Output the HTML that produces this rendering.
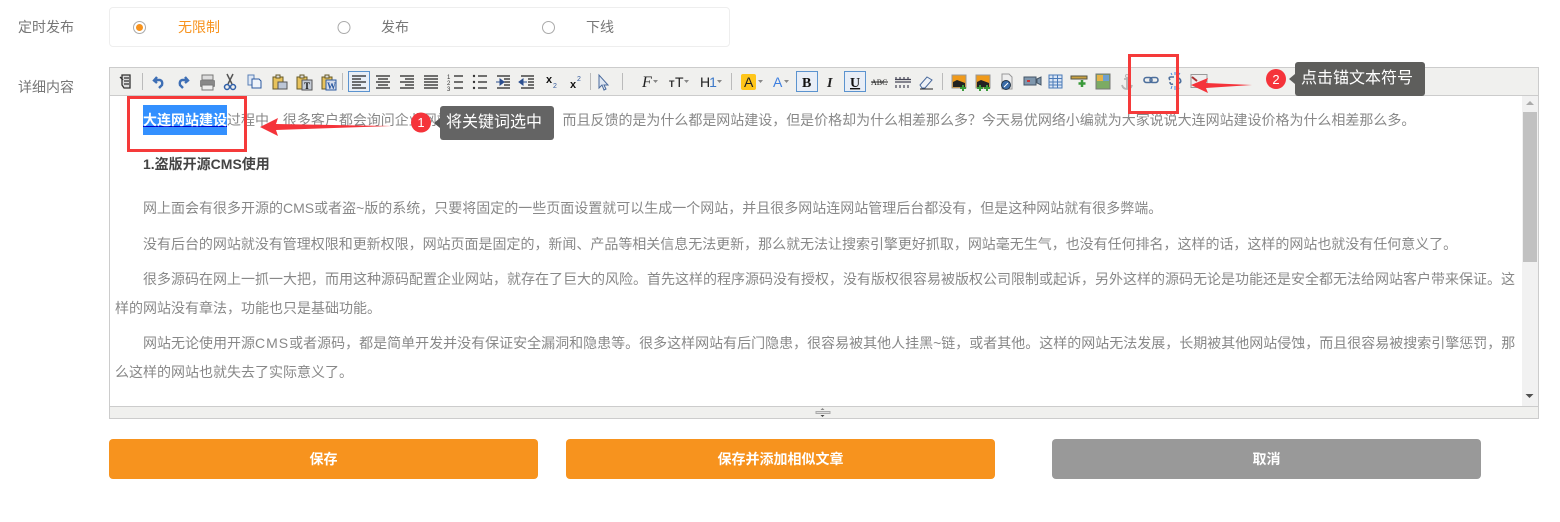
<!DOCTYPE html>
<html lang="zh">
<head>
<meta charset="utf-8">
<style>
html,body{margin:0;padding:0;background:#fff}
body{width:1560px;height:522px;position:relative;overflow:hidden;font-family:"Liberation Sans","Noto Sans CJK SC",sans-serif;font-size:14px;color:#777}
.a{position:absolute;white-space:nowrap}
.t{position:absolute;white-space:nowrap;font-size:14px;line-height:20px;color:#888}
.btn{position:absolute;top:439px;width:429px;height:40px;border-radius:4px;background:#f7931e;color:#fff;font-weight:bold;font-size:14px;line-height:40px;text-align:center}
.lb{position:absolute;background:#646464;border-radius:3px;color:#fff;font-size:16px;line-height:34px;height:34px;text-align:left;white-space:nowrap}
</style>
</head>
<body>
<div class="a" style="left:18px;top:19px;line-height:17px">定时发布</div>
<div class="a" style="left:109px;top:7px;width:619px;height:38px;border:1px solid #eee;border-radius:4px"></div>
<svg class="a" style="left:130px;top:18px" width="430" height="18" fill="none">
<circle cx="9.500" cy="9.500" r="6" stroke="#aaa"/><circle cx="9.500" cy="9.500" r="3.500" fill="#f7931e"/>
<circle cx="214" cy="9.500" r="6" stroke="#aaa"/><circle cx="418.500" cy="9.500" r="6" stroke="#aaa"/>
</svg>
<div class="a" style="left:178px;top:19px;line-height:17px;color:#f7931e">无限制</div>
<div class="a" style="left:381px;top:19px;line-height:17px">发布</div>
<div class="a" style="left:586px;top:19px;line-height:17px">下线</div>
<div class="a" style="left:18px;top:79px;line-height:17px">详细内容</div>

<div class="a" style="left:109px;top:67px;width:1428px;height:350px;border:1px solid #ccc;background:#fff"></div>
<div class="a" style="left:110px;top:68px;width:1428px;height:27px;background:#f0f0ee;border-bottom:1px solid #ccc"></div>
<div class="a" style="left:110px;top:406px;width:1428px;height:11px;background:#f0f0ee;border-top:1px solid #ccc"></div>

<svg class="a" style="left:110px;top:68px" width="1100" height="27" fill="none" font-family="Liberation Sans, sans-serif">
<g stroke="#bbb"><path d="M32.500 5v17M232.500 5v17M480.500 5v17M512.500 5v17M621.500 5v17M832.500 5v17"/></g>
<rect x="238.500" y="3.500" width="21" height="20" fill="#e8eef7" stroke="#5b93cf"/>
<rect x="686.500" y="3.500" width="21" height="20" fill="#e8eef7" stroke="#5b93cf"/>
<rect x="734.500" y="3.500" width="21" height="20" fill="#e8eef7" stroke="#5b93cf"/>
<path d="M12 7h8v13h-6l-2-3zM10 9l3 3M14 10h5M14 13h5M14 16h5" stroke="#333" stroke-width="1.300" fill="#ddd"/>
<path d="M47 9l-3 3.500 3 2.500M44 12h6q3 1 2 5l-3 3" stroke="#3e6fb5" stroke-width="2.400"/>
<path d="M75 9l3 3.500-3 2.500M78 12h-6q-3 1-2 5l3 3" stroke="#3e6fb5" stroke-width="2.400"/>
<rect x="90" y="12" width="15" height="7" rx="1" fill="#888"/><rect x="92" y="7" width="11" height="5" fill="#ddd" stroke="#777"/><rect x="92" y="17" width="11" height="5" fill="#eee" stroke="#777"/>
<path d="M117 6l5 10M123 6l-5 10" stroke="#555" stroke-width="1.500"/><circle cx="117" cy="19" r="2.500" stroke="#2f5fa8" stroke-width="1.500"/><circle cx="123" cy="19" r="2.500" stroke="#2f5fa8" stroke-width="1.500"/>
<path d="M138 7h6v10h-6z" fill="#dfe8f5" stroke="#5a7fb5"/><path d="M142 11h7l2 2v7h-9z" fill="#eef3fa" stroke="#2c5aa0"/>
<g stroke="#665a28"><rect x="163" y="9" width="10" height="12" fill="#e8c35c"/><rect x="166" y="7" width="4" height="3" fill="#ddd"/><rect x="168" y="14" width="9" height="7" fill="#bcc6d6" stroke="#555"/></g>
<g stroke="#665a28"><rect x="187" y="9" width="10" height="12" fill="#e8c35c"/><rect x="190" y="7" width="4" height="3" fill="#ddd"/><rect x="192" y="12" width="10" height="10" fill="#c5ccd6" stroke="#555"/></g>
<text x="194" y="21" font-size="9" font-weight="bold" fill="#111" font-family="Liberation Serif, serif">T</text>
<g stroke="#665a28"><rect x="212" y="9" width="10" height="12" fill="#e8c35c"/><rect x="215" y="7" width="4" height="3" fill="#ddd"/><rect x="216" y="12" width="10" height="10" fill="#d5dcea" stroke="#2c5aa0"/></g>
<text x="217" y="21" font-size="9" font-weight="bold" fill="#2c5aa0" font-family="Liberation Serif, serif">W</text>
<g stroke="#222" stroke-width="1.200">
<path d="M242 8h14M242 11h9M242 14h14M242 17h9M242 20h14"/>
<path d="M266 8h14M268 11h10M266 14h14M268 17h10M266 20h14"/>
<path d="M290 8h14M295 11h9M290 14h14M295 17h9M290 20h14"/>
<path d="M314 8h14M314 11h14M314 14h14M314 17h14M314 20h14"/>
<path d="M344 8h9M344 14h9M344 20h9"/>
<path d="M368 8h9M368 14h9M368 20h9"/>
</g>
<text x="337" y="11" font-size="6" fill="#333">1</text><text x="337" y="17" font-size="6" fill="#333">2</text><text x="337" y="23" font-size="6" fill="#333">3</text>
<g fill="#333"><circle cx="364" cy="8" r="1.200"/><circle cx="364" cy="14" r="1.200"/><circle cx="364" cy="20" r="1.200"/></g>
<g stroke="#222" stroke-width="1.200"><path d="M387 8h13M394 11h6M394 14h6M394 17h6M387 20h13M411 8h13M418 11h6M418 14h6M418 17h6M411 20h13"/></g>
<path d="M386 14h4M390 11v6l4-3z" fill="#2c4f8f" stroke="#2c4f8f"/><path d="M417 14h-4M413 11v6l-4-3z" fill="#2c4f8f" stroke="#2c4f8f"/>
<text x="436" y="15" font-size="11" font-weight="bold" fill="#111">x</text><text x="443" y="20" font-size="7" fill="#345a9c">2</text>
<text x="460" y="20" font-size="11" font-weight="bold" fill="#111">x</text><text x="467" y="13" font-size="7" fill="#345a9c">2</text>
<path d="M489 7v13l3-3 2 5 2-1-2-4h4z" fill="#dfe7f2" stroke="#4a6a9c"/>
<text x="532" y="19" font-size="16" font-style="italic" fill="#222" font-family="Liberation Serif, serif">F</text>
<text x="559" y="19" font-size="9" font-weight="bold" fill="#222">T</text><text x="565" y="19" font-size="14" fill="#222">T</text>
<text x="590" y="19" font-size="14" fill="#222">H<tspan fill="#3b78c9" dx="-1">1</tspan></text>
<path d="M543 12h5l-2.500 3zM574 12h5l-2.500 3zM607 12h5l-2.500 3zM648 12h5l-2.500 3zM674 12h5l-2.500 3z" fill="#888"/>
<rect x="631" y="6" width="15" height="16" rx="2" fill="#ffc61a"/><text x="634" y="19" font-size="14" fill="#222">A</text>
<text x="663" y="19" font-size="14" fill="#3d7fe0">A</text>
<text x="692" y="19" font-size="14" font-weight="bold" fill="#111" font-family="Liberation Serif, serif">B</text>
<text x="717" y="19" font-size="14" font-weight="bold" font-style="italic" fill="#222" font-family="Liberation Serif, serif">I</text>
<text x="740" y="19" font-size="14" font-weight="bold" fill="#111" text-decoration="underline" font-family="Liberation Serif, serif">U</text>
<text x="761" y="17" font-size="8" fill="#222" font-family="Liberation Serif, serif">ABC</text><path d="M761 14h17" stroke="#222"/>
<path d="M785 14h16M786 9v2M790 9v2M794 9v2M798 9v2M786 17v3M790 17v3M794 17v3M798 17v3M785 11.500h16" stroke="#445" stroke-width="1.200"/>
<path d="M810 17l7-8 5 3-7 8h-3z" fill="#eef2f7" stroke="#4a6a9c"/><path d="M810 21h13" stroke="#222"/>
<g><rect x="842" y="7" width="14" height="13" fill="#f09a1a" stroke="#999"/><path d="M843 14l4-2 8 3v4h-12z" fill="#222"/><path d="M853 17v6M850 20h6" stroke="#3a9a3a" stroke-width="2"/></g>
<g><rect x="866" y="7" width="14" height="13" fill="#f09a1a" stroke="#999"/><path d="M867 14l4-2 8 3v4h-12z" fill="#222"/><path d="M870 17v6M867 20h6M877 17v6M874 20h6" stroke="#3a9a3a" stroke-width="2"/></g>
<path d="M892 6h7l3 3v12h-10z" fill="#eee" stroke="#999"/><circle cx="896" cy="17" r="4.500" fill="#3a6ca8" stroke="#234"/><path d="M894 19l4-4" stroke="#fff"/>
<path d="M914 9h12v8h-12zM927 11l4-2v8l-4-2z" fill="#7f97ad" stroke="#456"/><rect x="917" y="12" width="3" height="2" fill="#c33"/>
<rect x="939" y="7" width="13" height="13" fill="#dbe6f5" stroke="#4a7ab8"/><path d="M939 10.500h13M939 14h13M939 17h13M943 7v13M947.500 7v13" stroke="#4a7ab8"/>
<rect x="961" y="8" width="16" height="3" fill="#c8a040" stroke="#554"/><path d="M972 12v7M968.500 15.500h7" stroke="#3a9a3a" stroke-width="2.500"/>
<rect x="986" y="6" width="14" height="15" fill="#7cab64" stroke="#777"/><path d="M987 7h6v6h-6z" fill="#e5b348"/><path d="M993 7h6v6h-6z" fill="#6ea0d0"/>
<path d="M1017 9v11M1012 17q1 4 5 4t5-4M1014 11h6" stroke="#b5b5b5" stroke-width="1.800"/><circle cx="1017" cy="8" r="1.500" stroke="#b5b5b5"/>
<rect x="1034" y="9.500" width="8" height="5" rx="2.500" stroke="#4d6f9c" stroke-width="1.600"/><rect x="1040" y="9.500" width="8" height="5" rx="2.500" stroke="#4d6f9c" stroke-width="1.600"/>
<path d="M1060 12q-2-3 1-3h3M1066 15h3q3-1 1-4M1060 14q0 3 3 2M1070 11l-3-2" stroke="#4d6f9c" stroke-width="1.600"/><path d="M1065 4v3M1070 5l-2 3M1061 5l1 2M1065 18v4M1061 21l1-3M1069 21l-1-3" stroke="#4a8ae0"/>
<rect x="1081" y="6.500" width="16" height="13" fill="#eee" stroke="#999"/><path d="M1082 9l5 4" stroke="#a33" stroke-width="2"/>
</svg>

<div class="t" style="left:143px;top:110px;padding-left:84px;letter-spacing:-.02px">过程中，很多客户都会询问企业网站建设价格是多少，而且反馈的是为什么都是网站建设，但是价格却为什么相差那么多？今天易优网络小编就为大家说说大连网站建设价格为什么相差那么多。</div>
<div class="a" style="left:143px;top:105px;width:84px;height:30px;background:#3390ff"></div>
<div class="a" style="left:143px;top:110px;width:84px;line-height:20px;font-size:14px;font-weight:bold;color:#fff;text-decoration:underline;text-decoration-color:#00c">大连网站建设</div>
<div class="t" style="left:143px;top:154px;font-weight:bold;color:#444">1.盗版开源CMS使用</div>
<div class="t" style="left:143px;top:198px">网上面会有很多开源的CMS或者盗~版的系统，只要将固定的一些页面设置就可以生成一个网站，并且很多网站连网站管理后台都没有，但是这种网站就有很多弊端。</div>
<div class="t" style="left:143px;top:234px;letter-spacing:-.02px">没有后台的网站就没有管理权限和更新权限，网站页面是固定的，新闻、产品等相关信息无法更新，那么就无法让搜索引擎更好抓取，网站毫无生气，也没有任何排名，这样的话，这样的网站也就没有任何意义了。</div>
<div class="t" style="left:143px;top:269px">很多源码在网上一抓一大把，而用这种源码配置企业网站，就存在了巨大的风险。首先这样的程序源码没有授权，没有版权很容易被版权公司限制或起诉，另外这样的源码无论是功能还是安全都无法给网站客户带来保证。这</div>
<div class="t" style="left:115px;top:298px">样的网站没有章法，功能也只是基础功能。</div>
<div class="t" style="left:143px;top:333px">网站无论使用开源<span style="letter-spacing:1px">CMS</span>或者源码，都是简单开发并没有保证安全漏洞和隐患等。很多这样网站有后门隐患，很容易被其他人挂黑~链，或者其他。这样的网站无法发展，长期被其他网站侵蚀，而且很容易被搜索引擎惩罚，那</div>
<div class="t" style="left:115px;top:362px">么这样的网站也就失去了实际意义了。</div>

<div class="a" style="left:1522px;top:96px;width:16px;height:310px;background:#f1f1f1"></div>
<div class="a" style="left:1523px;top:112px;width:14px;height:150px;background:#c1c1c1"></div>
<svg class="a" style="left:1522px;top:96px" width="16" height="310"><path d="M4 9h8l-4-4z" fill="#aaa"/><path d="M3.500 298h8l-4 4z" fill="#505050"/></svg>
<svg class="a" style="left:815px;top:407px" width="16" height="11" fill="none"><path d="M5.500 3h4L7.500 1z" fill="#888"/><rect x="1" y="4.500" width="14" height="2" fill="#ddd" stroke="#aaa"/><path d="M5.500 8h4l-2 2z" fill="#444"/></svg>

<svg class="a" style="left:0;top:0" width="1560" height="522" fill="none">
<rect x="128.500" y="97.500" width="117" height="53" stroke="#f53a3a" stroke-width="3"/>
<rect x="1129.500" y="55.500" width="48" height="57" stroke="#f53a3a" stroke-width="3"/>
<path d="M260 127l18-9-2 6 116 2-116 4 2 6z" fill="#f5333a"/>
<path d="M1191 85l17-7-2 5 46 2-46 3 2 5z" fill="#f5333a"/>
<circle cx="421" cy="122.500" r="10" fill="#f5333a"/>
<circle cx="1276" cy="79" r="10" fill="#f5333a"/>
<path d="M440 118l-6 5 6 5z" fill="#555"/>
<path d="M1295 74l-6 5 6 5z" fill="#5e5e5c"/>
</svg>
<div class="a" style="left:416px;top:114px;width:10px;text-align:center;color:#fff;font-size:13px;line-height:17px">1</div>
<div class="a" style="left:1271px;top:71px;width:10px;text-align:center;color:#fff;font-size:13px;line-height:17px">2</div>
<div class="lb" style="left:440px;top:106px;width:108px;padding-left:6px">将关键词选中</div>
<div class="lb" style="left:1295px;top:62px;width:124px;padding-left:6px;background:#5e5e5c">点击锚文本符号</div>

<div class="btn" style="left:109px">保存</div>
<div class="btn" style="left:566px">保存并添加相似文章</div>
<div class="btn" style="left:1052px;background:#999">取消</div>
</body>
</html>
